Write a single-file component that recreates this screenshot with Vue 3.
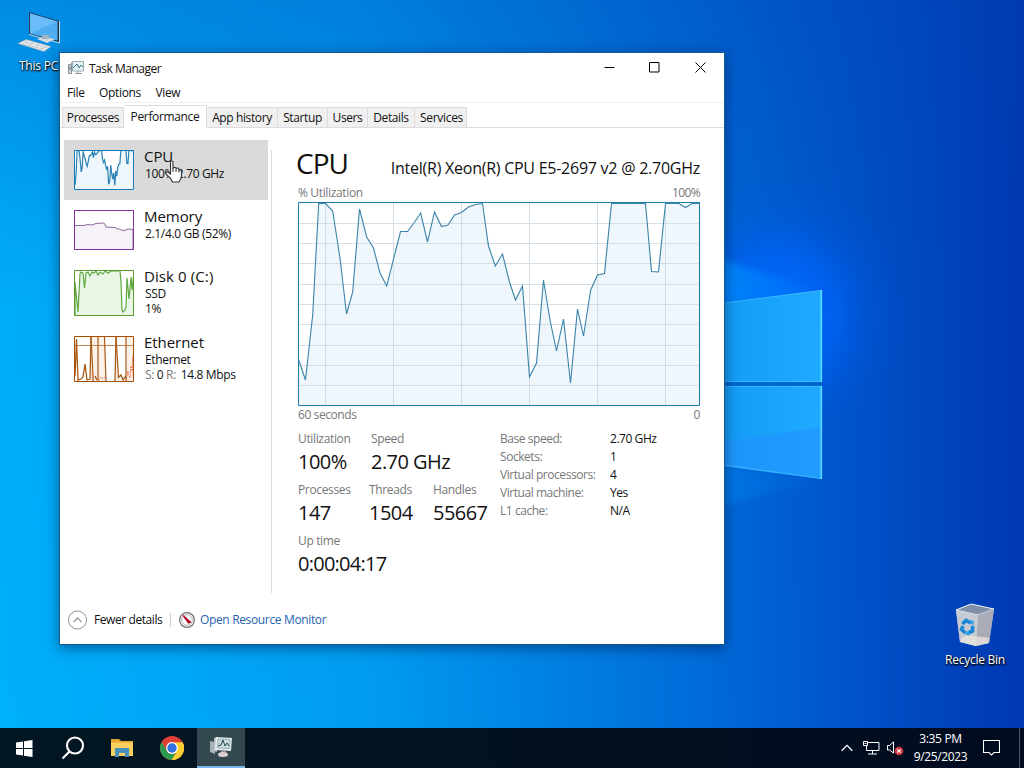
<script setup>
const tabs = [
  { name: 'Processes', cls: 't-proc' },
  { name: 'Performance', cls: 't-perf active' },
  { name: 'App history', cls: 't-app' },
  { name: 'Startup', cls: 't-start' },
  { name: 'Users', cls: 't-users' },
  { name: 'Details', cls: 't-details' },
  { name: 'Services', cls: 't-serv' },
]
const facts = [
  ['Base speed:', '2.70 GHz'],
  ['Sockets:', '1'],
  ['Virtual processors:', '4'],
  ['Virtual machine:', 'Yes'],
  ['L1 cache:', 'N/A'],
]
const cpu = [
  [0, 155], [7.5, 177], [14.7, 112], [20.7, 0.5], [27.5, 0.5], [34.7, 8], [42, 55], [48.5, 111], [54.7, 89], [61.5, 6],
  [68.7, 34], [75.5, 45], [82, 70], [88.7, 83], [102.5, 28.5], [109.5, 28.5], [116, 20], [122.7, 10], [129.5, 39],
  [136.5, 9], [143.5, 23.5], [150, 22], [156.5, 12], [163.5, 9.5], [170.5, 4], [177.5, 1.5], [184.5, 0.5], [190.5, 43],
  [197.3, 63], [204.5, 51], [211.5, 79], [217.5, 97], [224.5, 83], [231.5, 174], [238.5, 160], [245.5, 77], [252, 117],
  [258.5, 148], [265.5, 116], [272.5, 180], [279.5, 106], [285.5, 133], [292.7, 87], [299.5, 72], [306.5, 70.5],
  [313.5, 0.5], [347.5, 0.5], [353.5, 68.5], [360.5, 69], [367.5, 0.5], [381, 0.5], [387.5, 4.5], [394, 0.5], [401, 0.5],
]
const line = cpu.map((p) => p.join(',')).join(' ')
const area = `0,203 ${line} 401,203`
const gridX = [27.5, 95.5, 163.5, 231.5, 299.5, 367.5]
const gridY = [20.5, 40.5, 60.5, 81.5, 101.5, 121.5, 142.5, 162.5, 182.5]
</script>

<template>
  <div class="desktop">
    <svg class="wallpaper" width="1024" height="768" viewBox="0 0 1024 768">
      <defs>
        <linearGradient id="bg" x1="0" x2="1" y1="0" y2="0">
          <stop offset="0" stop-color="#00b0fb" /><stop offset=".35" stop-color="#009df1" />
          <stop offset=".68" stop-color="#006cd9" /><stop offset=".82" stop-color="#0055cb" />
          <stop offset="1" stop-color="#0038b2" />
        </linearGradient>
        <linearGradient id="top" x1="0" x2="0" y1="0" y2="1">
          <stop offset="0" stop-color="#003fae" stop-opacity=".32" /><stop offset=".4" stop-color="#003fae" stop-opacity="0.03" /><stop offset="1" stop-color="#003fae" stop-opacity="0" />
        </linearGradient>
        <radialGradient id="glow"><stop offset="0" stop-color="#006cff" /><stop offset=".45" stop-color="#0064fa" stop-opacity=".7" /><stop offset=".75" stop-color="#005aea" stop-opacity=".2" /><stop offset="1" stop-color="#0055dd" stop-opacity="0" /></radialGradient>
        <linearGradient id="pane" x1="0" x2="1" y1="0" y2="0"><stop offset="0" stop-color="#1298f4" /><stop offset="1" stop-color="#1faaff" /></linearGradient>
        <linearGradient id="beam" x1="0" x2="1" y1="0" y2="0"><stop offset="0" stop-color="#009cff" stop-opacity=".8" /><stop offset="1" stop-color="#0080ff" stop-opacity="0.1" /></linearGradient>
        <filter id="soft"><feGaussianBlur stdDeviation="3" /></filter>
      </defs>
      <rect width="1024" height="768" fill="url(#bg)" />
      <rect width="1024" height="768" fill="url(#top)" />
      <ellipse cx="780" cy="315" rx="125" ry="135" fill="url(#glow)" />
      <path d="M700 254L822 290L700 308Z" fill="url(#beam)" filter="url(#soft)" />
      <path d="M700 462L822 480L700 512Z" fill="url(#beam)" filter="url(#soft)" opacity=".5" />
      <path d="M700 306L822 290V382H700Z" fill="url(#pane)" />
      <path d="M700 386H822V479L700 463Z" fill="url(#pane)" />
      <path d="M700 445L822 427V479L700 463Z" fill="#2590ff" opacity=".55" />
      <path d="M700 382h122v4H700z" fill="#0067cc" />
      <path d="M724 303L821 290.500M724 465L821 478.500M724 381.500H821M724 386.500H821" stroke="#46c2ff" fill="none" opacity=".7" />
      <path d="M821.300 290V382M821.300 386V479" stroke="#5bddff" stroke-width="1.600" />
    </svg>

    <div class="shortcut pc">
      <svg width="44" height="44" viewBox="0 0 44 44">
        <path d="M11 1L41 10V31L11 23Z" fill="#203a58" />
        <path d="M12 2.200L39.500 10.500V29.500L12 22.500Z" fill="#4fadf2" />
        <path d="M12 2.200L39.500 10.500L12 22.500Z" fill="#83caff" opacity=".5" />
        <path d="M41.500 10V32L11 23.500" stroke="#b9d6e8" fill="none" />
        <path d="M19 28l8-2.500 10 3-8 3.500z" fill="#d6dde2" /><path d="M24 24h7v4h-7z" fill="#9fb4c3" />
        <path d="M0 32.500L8 28.500L33 35.500L26 40.500Z" fill="#eceff1" stroke="#9aa8b2" stroke-width=".7" />
        <path d="M4 33L27 38.500M7 31L30 37M9 29.500L5 33M15 31L11 35M21 33L17 37M27 35L23 39" stroke="#b7c0c7" stroke-width=".8" />
      </svg>
      <span>This PC</span>
    </div>

    <div class="shortcut bin">
      <svg width="44" height="46" viewBox="0 0 44 46">
        <path d="M3 8L18 2L41 7L36 41L23 44L7 40Z" fill="#c9ced6" opacity=".95" />
        <path d="M3 8L18 2L41 7L25 13Z" fill="#7e8fa8" stroke="#f2f5f8" />
        <path d="M25 13L41 7L36 41L23 44Z" fill="#a9acb7" />
        <path d="M3 8L25 13L23 44L7 40Z" fill="#c6cad2" />
        <path d="M8 37L14 33L36 36L35.500 41L23 44L7.500 40Z" fill="#e9e2dc" opacity=".8" />
        <g fill="none" stroke="#1787d6" stroke-width="3.600"><path d="M9.500 22L13 18.500L18 21" /><path d="M19.500 24L19.500 29L15 31" /><path d="M12.500 31L8.500 27.500L10 24" /></g>
        <path d="M16 18l5 1-1 5zM16 28l-4 4 4 2z" fill="#29a4ea" />
      </svg>
      <span>Recycle Bin</span>
    </div>

    <main class="window">
      <header class="titlebar">
        <svg class="appicon" width="17" height="16" viewBox="0 0 17 16">
          <path d="M.5 4.500h3v9h-3z" fill="#d3dbdf" stroke="#84939b" /><path d="M1 7h2M1 9h2" stroke="#6d7d86" />
          <path d="M4.500 1.500h11v9.500h-11z" fill="#e4f1f5" stroke="#9badb5" />
          <path d="M5 8l2-2 2-2 2 4 2-3 2 2" fill="none" stroke="#3a7c94" />
          <path d="M7 13.500h7M10 11v2M3 4l1-2" stroke="#87959d" />
        </svg>
        <span class="title">Task Manager</span>
        <div class="controls">
          <svg width="11" height="11" viewBox="0 0 11 11"><path d="M.5 5.500h10" /></svg>
          <svg width="11" height="11" viewBox="0 0 11 11"><path d="M.5.500h9.500v9.500h-9.500z" /></svg>
          <svg width="11" height="11" viewBox="0 0 11 11"><path d="M.5.500l10 10M10.500.500l-10 10" /></svg>
        </div>
      </header>
      <nav class="menu"><span>File</span><span>Options</span><span>View</span></nav>
      <nav class="tabs">
        <div v-for="t in tabs" :key="t.name" class="tab" :class="t.cls"><span>{{ t.name }}</span></div>
      </nav>

      <section class="body">
        <aside class="list">
          <div class="item selected">
            <svg class="thumb" width="60" height="40" viewBox="0 0 60 40">
              <g transform="scale(.1496 .197)"><polygon :points="area" fill="#ecf6fc" /><polyline :points="line" fill="none" stroke="#2b82b4" stroke-width="1.200" vector-effect="non-scaling-stroke" /></g>
              <path d="M.5.500h59v39H.5z" fill="none" stroke="#117dbb" />
            </svg>
            <div class="info"><h3>CPU</h3><p>100% 2.70 GHz</p></div>
          </div>
          <div class="item">
            <svg class="thumb" width="60" height="40" viewBox="0 0 60 40">
              <path d="M0 15.500h10l3-1 5 .5 4-1.500 7-.5 1.500.5 1.500 3.500 9 .5 3 1.500 2 0 2 1.500 4-.5 2-1 5 .5V40H0z" fill="#f6f2f8" stroke="#8d6a9e" />
              <path d="M.5.500h59v39H.5z" fill="none" stroke="#8434a0" />
            </svg>
            <div class="info"><h3>Memory</h3><p>2.1/4.0 GB (52%)</p></div>
          </div>
          <div class="item tall">
            <svg class="thumb" width="60" height="46" viewBox="0 0 60 46">
              <path d="M1 12L4 42L6 4L7 2L9 3L10.500 18L12 3L14 2L16 6L18 2L20 3L22 1L24 5L26 2L29 4L31 1L34 3L37 1H46L47 12L48 40L49 42L51 40L52 37L53 8L55 29L57 7L58 20L60 2V46H1z" fill="#e9f6e5" stroke="#5fa840" stroke-width="1.200" />
              <path d="M.5.500h59v45H.5z" fill="none" stroke="#5a9a2c" />
            </svg>
            <div class="info"><h3 class="n-disk">Disk 0 (C:)</h3><p>SSD</p><p>1%</p></div>
          </div>
          <div class="item tall">
            <svg class="thumb" width="60" height="46" viewBox="0 0 60 46">
              <path d="M17 1h8v44h-8zM24 1h7l1 44h-8zM42 1h2l1 44h-3zM52 1h7v44h-7z" fill="#fdf1e8" />
              <path d="M1 9.500h58" stroke="#c48656" />
              <path d="M24 1v44M52 1v44M30.500 1l1.500 44M17 1L19 40V45M42 1L44.500 42" fill="none" stroke="#a95a19" stroke-width="1.200" />
              <path d="M1 40L2.500 3L4 44L7 43L9 41L11 28L13 44L16 43L17 1M21 40L23 44M41 45L42 1M44 42L47 39L49 44L52 40" fill="none" stroke="#a75a15" stroke-width="1.300" />
              <path d="M18 36l1 8M25 44l2-3 2 2 2-2M52 45l2-10 2 7 1-12 1 5 1-16v22" fill="none" stroke="#ea6a45" stroke-dasharray="1.500 1" />
              <path d="M.5.500h59v45H.5z" fill="none" stroke="#a74f01" />
            </svg>
            <div class="info"><h3>Ethernet</h3><p>Ethernet</p><p><i>S:</i> 0 <i>R:</i> <b>14.8 Mbps</b></p></div>
          </div>
        </aside>
        <div class="divider"></div>

        <article class="detail">
          <div class="heading"><h1>CPU</h1><h2>Intel(R) Xeon(R) CPU E5-2697 v2 @ 2.70GHz</h2></div>
          <div class="caption top"><span>% Utilization</span><span class="c-max">100%</span></div>
          <svg class="graph" width="402" height="204" viewBox="0 -1 402 204">
            <rect y="-1" width="402" height="204" fill="#fff" />
            <polygon :points="area" fill="#eff6fc" />
            <path v-for="x in gridX" :key="'x' + x" :d="`M${x} 0V203`" stroke="#d0dee5" />
            <path v-for="y in gridY" :key="'y' + y" :d="`M0 ${y}H402`" stroke="#d3dfe4" />
            <polyline :points="line" fill="none" stroke="#3b83a9" stroke-width="1.100" />
            <path d="M.5 -.5h401v203H.5z" fill="none" stroke="#1f7ea9" />
          </svg>
          <div class="caption bottom"><span>60 seconds</span><span>0</span></div>
          <div class="numbers">
            <div class="stats">
              <div class="row r1"><div class="stat"><label>Utilization</label><strong>100%</strong></div><div class="stat"><label>Speed</label><strong>2.70 GHz</strong></div></div>
              <div class="row r2"><div class="stat"><label>Processes</label><strong>147</strong></div><div class="stat"><label>Threads</label><strong>1504</strong></div><div class="stat"><label>Handles</label><strong>55667</strong></div></div>
              <div class="row r3"><div class="stat"><label>Up time</label><strong>0:00:04:17</strong></div></div>
            </div>
            <dl class="facts"><template v-for="f in facts" :key="f[0]"><dt>{{ f[0] }}</dt><dd>{{ f[1] }}</dd></template></dl>
          </div>
        </article>
      </section>

      <footer class="footer">
        <svg width="19" height="20" viewBox="0 0 19 20"><circle cx="9.500" cy="10" r="9" fill="#fff" stroke="#929292" /><path d="M5.500 12L9.500 8L13.500 12" fill="none" stroke="#9a9a9a" stroke-width="1.300" /></svg>
        <span class="fewer">Fewer details</span>
        <i class="bar"></i>
        <svg width="18" height="18" viewBox="0 0 18 18"><circle cx="9" cy="9" r="7.400" fill="#f3f4f4" stroke="#707477" stroke-width="1.200" /><circle cx="9" cy="9" r="5.300" fill="#fff" stroke="#bbb9b7" /><path d="M5 4.500L12.500 11L10.500 12Z" fill="#b40020" stroke="#b40020" stroke-width="1.200" /></svg>
        <a>Open Resource Monitor</a>
      </footer>
    </main>

    <svg class="cursor" width="18" height="24" viewBox="0 0 18 24">
      <path d="M5.500 14V2.500Q5.500 1 6.800 1T8 2.500V9Q8.500 7 10 7.500T11 9Q12 7.500 13.200 8.300T14 10Q16.500 9 16.500 12V16Q16 19 14 22H7.500Q6 18 2 15Q0 12.500 1.500 12T5.500 14Z" fill="#fff" stroke="#333" stroke-width="1.100" />
      <path d="M8 8.500V12M11 9V12M14 10V12.500" stroke="#333" fill="none" />
    </svg>

    <footer class="taskbar">
      <div class="slot start"><svg width="17" height="17" viewBox="0 0 17 17" fill="#fff"><path d="M0 2.500L7 1.500V8H0zM8 1.300L16.500 0V8H8zM0 9h7v6.500l-7-1zM8 9h8.500v8L8 15.700z" /></svg></div>
      <div class="slot search"><svg width="24" height="24" viewBox="0 0 24 24" fill="none" stroke="#fff" stroke-width="2.100"><circle cx="14" cy="9.500" r="8" /><path d="M8.500 15.500L1.500 22.500" /></svg></div>
      <div class="slot"><svg width="22" height="20" viewBox="0 0 22 20"><path d="M0 1h8l2 2h12v15H0z" fill="#e5a72e" /><path d="M0 4.500h22V18H0z" fill="#f9cf60" /><path d="M4 19v-9h14v9h-4v-4H8v4z" fill="#4590bd" /></svg></div>
      <div class="slot"><svg width="24" height="24" viewBox="0 0 24 24"><circle cx="12" cy="12" r="12" fill="#df4035" /><path d="M11.500 24L17.200 15V6.500H22.700A12 12 0 0 1 11.500 24" fill="#fccd31" /><path d="M1.600 6L6.800 15A6 6 0 0 0 17.200 15L11.700 24A12 12 0 0 1 1.600 6" fill="#2b9a50" /><path d="M17.200 15L11.700 24A12 12 0 0 0 22.700 6.500H14V12z" fill="#fccd31" /><circle cx="12" cy="12" r="5.900" fill="#fff" /><circle cx="12" cy="12" r="4.700" fill="#326fe0" /></svg></div>
      <div class="slot current"><svg width="24" height="22" viewBox="0 0 24 22"><path d="M1 5l5 1v12l-5-2z" fill="#a6b2b5" /><path d="M5 2l3-1v15l-3-1z" fill="#b9c5c8" /><path d="M7 1l16 1-1 13L6 14z" fill="#e2e9eb" /><path d="M9 3l12 .5-.7 9L8.500 12z" fill="#c6dadf" stroke="#72858c" stroke-width=".5" /><path d="M9 10l3-1 2-5 2 6 2-3 2 3" fill="none" stroke="#294b58" /><path d="M12 15h5v2h-5z" fill="#8c999d" /><ellipse cx="14" cy="18.500" rx="5" ry="2.500" fill="#dfcfd2" /></svg></div>
      <div class="tray">
        <svg width="12" height="8" viewBox="0 0 12 8"><path d="M.7 6.700L6 1.400L11.300 6.700" fill="none" stroke="#fff" stroke-width="1.300" /></svg>
        <svg class="net" width="17" height="14" viewBox="0 0 17 14" fill="none" stroke="#fff"><path d="M5 1.500h11v8H3.500V5M9.500 10v3M5 13h9M.5.500h4v4h-4zM1.500 2.500h2" /></svg>
        <svg class="vol" width="17" height="15" viewBox="0 0 17 15"><path d="M.5 4.500h2l4-3.500v11L2.500 9h-2z" fill="none" stroke="#fff" /><circle cx="12" cy="10" r="4.300" fill="#d33b45" /><path d="M10.300 8.300l3.400 3.400M13.700 8.300l-3.400 3.400" stroke="#fff" stroke-width="1.200" /></svg>
        <div class="clock"><span>3:35 PM</span><span>9/25/2023</span></div>
        <svg class="note" width="17" height="16" viewBox="0 0 17 16"><path d="M.5.500h16v12h-5.500L8.500 15L6 12.500H.5z" fill="none" stroke="#fff" stroke-width="1.100" /></svg>
        <i class="peek"></i>
      </div>
    </footer>
  </div>
</template>

<style>
body { overflow: hidden; }
</style>

<style scoped>
* { box-sizing: border-box; }
h1, h2, h3, p, dl, dd { margin: 0; font-weight: 400; }
svg { display: block; flex: none; }
.desktop { position: relative; width: 1024px; height: 768px; overflow: hidden; font-family: "Open Sans", "Noto Sans", sans-serif; font-size: 12px; line-height: 16px; letter-spacing: -.35px; color: #111; white-space: nowrap; cursor: default; }
.wallpaper { position: absolute; inset: 0; }
.shortcut { position: absolute; display: flex; flex-direction: column; align-items: center; color: #fff; text-shadow: 0 1px 2px #000, 1px 1px 2px #000; }
.pc { left: 18px; top: 11px; width: 44px; }
.pc span { margin: 3px 3px 0 0; letter-spacing: -.2px; }
.bin { left: 935px; top: 602px; width: 80px; }
.bin span { margin-top: 4px; letter-spacing: -.25px; }
.window { position: absolute; left: 59px; top: 52px; width: 666px; height: 593px; border: 1px solid #125b94; background: #fff; box-shadow: 0 3px 12px rgba(0, 20, 60, .5); display: flex; flex-direction: column; }
.titlebar { height: 30px; display: flex; align-items: center; padding-left: 8px; }
.title { margin-left: 4px; letter-spacing: -.5px; padding-top: 1px; }
.controls { margin-left: auto; display: flex; gap: 34px; padding-right: 18px; }
.controls svg { fill: none; stroke: #000; margin-bottom: 2px; }
.controls svg:nth-child(2) { margin-right: 1px; }
.menu { height: 20px; display: flex; gap: 14.5px; padding: 2px 7px 0; border-bottom: 1px solid #f0f0f0; }
.tabs { height: 25px; display: flex; align-items: flex-end; border-bottom: 1px solid #dcdcdc; padding-left: 2px; }
.tab { height: 20px; background: #f0f0f0; border: 1px solid #dcdcdc; border-left-width: 0; border-bottom: 0; display: flex; align-items: center; justify-content: center; padding-top: 1px; letter-spacing: -.38px; }
.tab.active { height: 23px; background: #fff; margin-bottom: -1px; padding-bottom: 2px; letter-spacing: -.35px; }
.t-proc { width: 62px; border-left-width: 1px; }
.t-perf { width: 83px; }
.t-app { width: 71px; }
.t-start { width: 50px; }
.t-users { width: 40px; }
.t-details { width: 47px; letter-spacing: -.4px; }
.t-serv { width: 52px; letter-spacing: -.3px; padding-left: 2px; }
.body { flex: 1; display: flex; }
.list { width: 208px; padding: 12px 0 0 4px; }
.item { height: 60px; display: flex; padding: 10px 0 0 10px; }
.item.tall { height: 66px; }
.item.selected { background: #d9d9d9; }
.thumb { background: #fff; }
.info { padding-left: 11px; margin-top: -4px; }
.info h3 { font-size: 15px; line-height: 20px; margin-left: -1px; letter-spacing: -.05px; }
.info h3.n-disk { letter-spacing: .1px; }
.info p { line-height: 15px; }
i { font-style: normal; color: #777; }
b { font-weight: 400; padding-left: 2px; }
.divider { width: 1px; margin: 22px 0 0 3px; height: 443px; background: #dadada; }
.detail { padding: 18px 0 0 26px; width: 428px; }
.heading { display: flex; height: 39px; justify-content: space-between; }
h1 { font-size: 28px; line-height: 36px; letter-spacing: -1px; margin-left: -2px; margin-top: -1px; }
h2 { font-size: 16px; line-height: 22px; letter-spacing: -.25px; padding-top: 11px; }
.caption { display: flex; justify-content: space-between; height: 17px; color: #777; }
.c-max { letter-spacing: -.6px; }
.caption.bottom { padding-top: 1px; height: 20px; letter-spacing: -.42px; }
.numbers { display: flex; padding-top: 5px; }
.stats { width: 202px; }
.row { display: flex; height: 51px; }
.stat { flex: none; }
.stat label { display: block; color: #777; height: 16px; }
.stat strong { display: block; font-weight: 400; font-size: 20px; line-height: 28px; padding-top: 1px; letter-spacing: -.55px; }
.r3 .stat strong { letter-spacing: -.75px; }
.r1 .stat { width: 73px; }
.r2 .stat { width: 71px; }
.r2 .stat + .stat { width: 64px; }
.facts { display: grid; grid-template-columns: 110px 60px; grid-auto-rows: 18px; align-content: start; letter-spacing: -.45px; }
dt { color: #777; }
.footer { height: 50px; display: flex; align-items: center; padding: 1px 0 0 8px; }
.fewer { margin-left: 7px; width: 76px; letter-spacing: -.42px; padding-top: 1px; }
.bar { width: 1px; height: 14px; background: #ccc; margin-right: 7px; }
.footer a { color: #2563ad; margin-left: 4px; padding-top: 1px; }
.cursor { position: absolute; left: 165px; top: 160px; }
.taskbar { position: absolute; left: 0; right: 0; bottom: 0; height: 40px; background: linear-gradient(90deg, #021722, #03101f 60%, #010b20); display: flex; color: #fff; }
.slot { width: 50px; display: flex; align-items: center; justify-content: center; }
.slot.start { width: 48px; }
.slot.search { width: 49px; }
.slot.current { width: 48px; background: #344850; border-bottom: 2px solid #76b9ed; }
.tray { margin-left: auto; display: flex; align-items: center; }
.net { margin-left: 10px; }
.vol { margin-left: 7px; }
.clock { width: 79px; padding-right: 6px; display: flex; flex-direction: column; align-items: center; line-height: 18px; margin-bottom: 1px; }
.note { margin-left: 0; }
.peek { width: 1px; height: 40px; background: #4b5668; margin: 0 4px 0 19px; }
</style>
